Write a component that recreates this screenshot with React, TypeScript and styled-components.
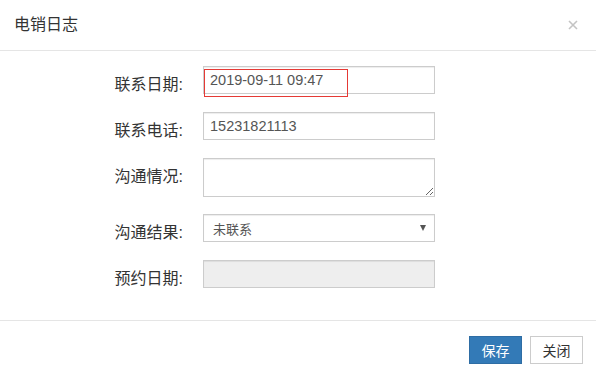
import React from "react";
import styled, { createGlobalStyle } from "styled-components";

const GlobalStyle = createGlobalStyle`
  html, body {
    margin: 0;
    padding: 0;
    background: #fff;
  }
  body {
    font-family: "Liberation Sans", "Noto Sans CJK SC", sans-serif;
    font-size: 14px;
    color: #333;
  }
  * { box-sizing: border-box; }
`;

const Dialog = styled.div`
  width: 596px;
  height: 376px;
  background: #fff;
  display: flex;
  flex-direction: column;
`;

const Header = styled.div`
  height: 53px;
  padding: 0 18px 0 14px;
  border-bottom: 1px solid #e5e5e5;
  display: flex;
  align-items: center;
  justify-content: space-between;
`;

const Title = styled.h4`
  margin: 0;
  font-size: 16px;
  font-weight: normal;
  color: #333;
  line-height: 20px;
`;

const CloseBtn = styled.button`
  border: 0;
  background: none;
  padding: 0;
  width: 10px;
  height: 10px;
  display: flex;
  align-items: center;
  justify-content: center;
  cursor: pointer;
`;

const Body = styled.div`
  padding: 15px 0 14px;
  flex: 1;
`;

const Row = styled.div`
  display: flex;
  align-items: flex-start;
  margin-bottom: 17px;
`;

const Label = styled.label`
  width: 203px;
  padding: 9px 20px 0 0;
  text-align: right;
  line-height: 20px;
  font-size: 16px;
  color: #333;
`;

const Field = styled.div`
  position: relative;
  width: 232px;
`;

const inputBase = `
  display: block;
  width: 100%;
  border: 1px solid #ccc;
  border-radius: 0;
  box-shadow: inset 0 1px 1px rgba(0, 0, 0, 0.075);
  font-family: "Liberation Sans", "Noto Sans CJK SC", sans-serif;
  color: #555;
  outline: none;
`;

const Input = styled.input`
  ${inputBase}
  height: 28px;
  padding: 0 6px;
  font-size: 14.5px;
  &:disabled {
    background: #eee;
  }
`;

const TextArea = styled.textarea`
  ${inputBase}
  height: 39px;
  padding: 4px 6px;
  font-size: 14px;
  resize: vertical;
`;

const Select = styled.div`
  ${inputBase}
  height: 28px;
  padding: 0 8px 0 9px;
  font-size: 13px;
  display: flex;
  align-items: center;
  justify-content: space-between;
  background: #fff;
`;

const Caret = styled.span`
  width: 0;
  height: 0;
  border-left: 3.5px solid transparent;
  border-right: 3.5px solid transparent;
  border-top: 6px solid #555;
  margin-top: -1px;
`;

const Marker = styled.div`
  position: absolute;
  left: 1px;
  top: 3px;
  width: 144px;
  height: 28px;
  border: 1px solid #e53935;
  pointer-events: none;
`;

const Footer = styled.div`
  height: 57px;
  border-top: 1px solid #e5e5e5;
  padding: 15px 13px 0 0;
  display: flex;
  justify-content: flex-end;
  align-items: flex-start;
  gap: 8px;
`;

const Button = styled.button<{ $primary?: boolean }>`
  width: 53px;
  height: 28px;
  border: 1px solid ${(p) => (p.$primary ? "#2e6da4" : "#ccc")};
  background: ${(p) => (p.$primary ? "#337ab7" : "#fff")};
  color: ${(p) => (p.$primary ? "#fff" : "#333")};
  font-family: "Liberation Sans", "Noto Sans CJK SC", sans-serif;
  font-size: 14px;
  border-radius: 0;
  padding: 0;
  cursor: pointer;
`;

export default function App() {
  return (
    <>
      <GlobalStyle />
      <Dialog>
        <Header>
          <Title>电销日志</Title>
          <CloseBtn aria-label="关闭">
            <svg width="10" height="10" viewBox="0 0 10 10">
              <path d="M1 1L9 9M9 1L1 9" stroke="#c4c4c4" strokeWidth="1.6" />
            </svg>
          </CloseBtn>
        </Header>
        <Body>
          <Row>
            <Label>联系日期:</Label>
            <Field>
              <Input defaultValue="2019-09-11 09:47" />
              <Marker />
            </Field>
          </Row>
          <Row>
            <Label>联系电话:</Label>
            <Field>
              <Input defaultValue="15231821113" />
            </Field>
          </Row>
          <Row>
            <Label>沟通情况:</Label>
            <Field>
              <TextArea />
            </Field>
          </Row>
          <Row>
            <Label>沟通结果:</Label>
            <Field>
              <Select>
                <span>未联系</span>
                <Caret />
              </Select>
            </Field>
          </Row>
          <Row>
            <Label>预约日期:</Label>
            <Field>
              <Input disabled />
            </Field>
          </Row>
        </Body>
        <Footer>
          <Button $primary>保存</Button>
          <Button>关闭</Button>
        </Footer>
      </Dialog>
    </>
  );
}
